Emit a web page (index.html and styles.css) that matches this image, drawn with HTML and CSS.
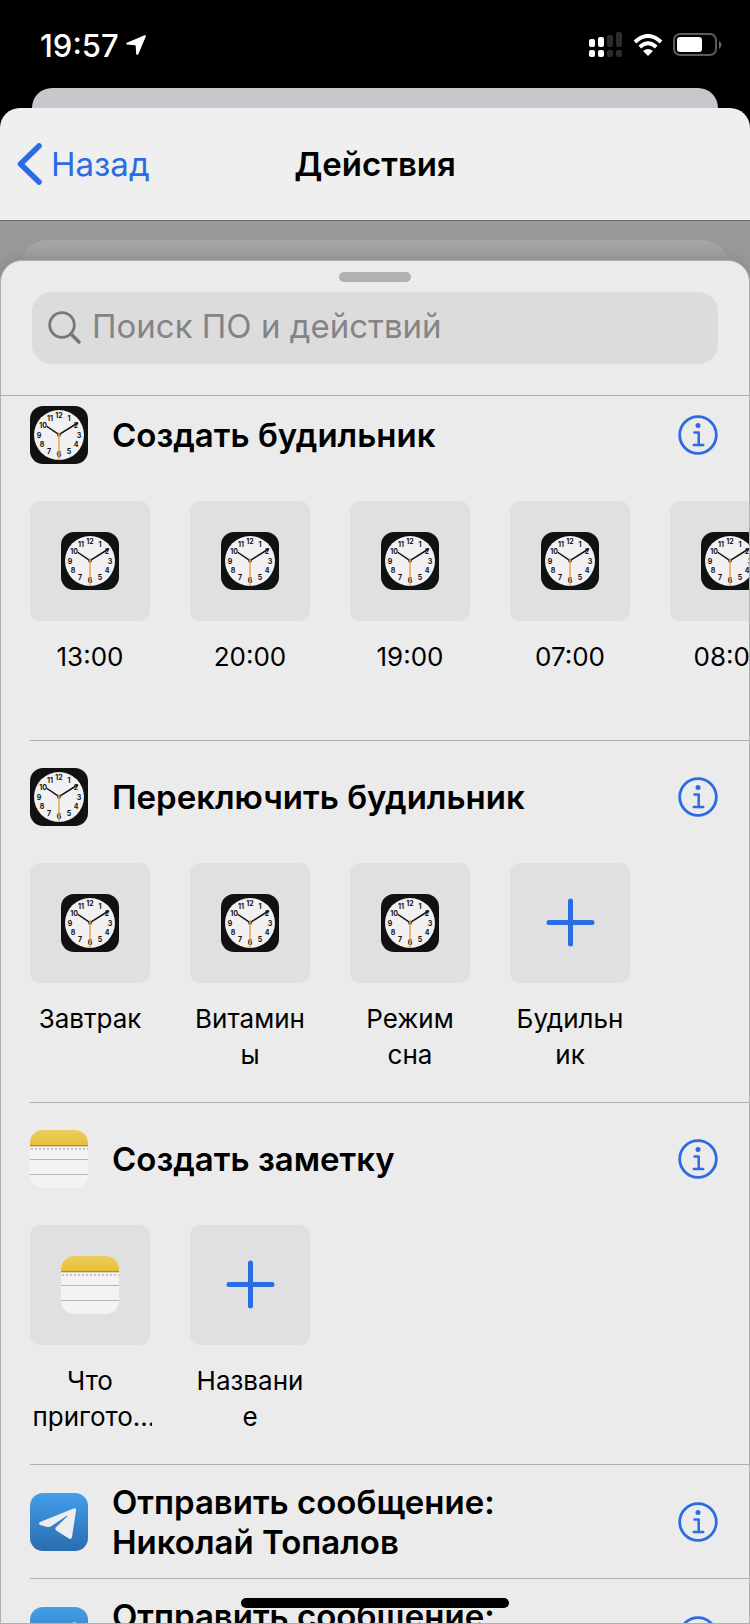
FILE: index.html
```html
<!DOCTYPE html>
<html lang="ru">
<head>
    <meta charset="UTF-8">
    <meta name="viewport" content="width=device-width, initial-scale=1.0">
    <title>Действия</title>
    <link rel="stylesheet" href="styles.css">
</head>
<body>
    <!-- Icon set -->
    <svg class="sprite" width="0" height="0" aria-hidden="true">
        <defs>
            <linearGradient id="noteTop" x1="0" y1="0" x2="0" y2="1">
                <stop offset="0" stop-color="#ebce60"/>
                <stop offset="1" stop-color="#e9bf35"/>
            </linearGradient>
            <linearGradient id="sky" x1="0" y1="0" x2="0" y2="1">
                <stop offset="0" stop-color="#429fe8"/>
                <stop offset="1" stop-color="#2a6cb0"/>
            </linearGradient>
            <clipPath id="rounded"><rect width="58" height="58" rx="13"/></clipPath>
        </defs>
        <symbol id="clock" viewBox="0 0 58 58">
            <rect width="58" height="58" rx="13" fill="#111"/>
            <circle cx="29" cy="29" r="25" fill="#f1f1f3"/>
            <g class="digits">
                <text x="29" y="12">12</text>
                <text x="39" y="15">1</text>
                <text x="46" y="22">2</text>
                <text x="49" y="32">3</text>
                <text x="46" y="41">4</text>
                <text x="39" y="48">5</text>
                <text x="29" y="51">6</text>
                <text x="19" y="48">7</text>
                <text x="12" y="41">8</text>
                <text x="9" y="32">9</text>
                <text x="13" y="22">10</text>
                <text x="20" y="15">11</text>
            </g>
            <path d="M17 20.5 29 28.7 47.5 17" fill="none" stroke="#111" stroke-width="1.5" stroke-linecap="round"/>
            <circle cx="29" cy="28.7" r="2" fill="#55402a"/>
            <path d="M29 26.5V54" stroke="#e5a144" stroke-width="1.4"/>
        </symbol>
        <symbol id="notes" viewBox="0 0 58 58">
            <g clip-path="url(#rounded)">
                <rect width="58" height="58" fill="#f3f3f3"/>
                <rect width="58" height="15" fill="url(#noteTop)"/>
                <path d="M0 15.5h58" stroke="#a08a4c"/>
                <path d="M0 16.5h58" stroke="#d9d2c2"/>
                <path d="M1 19h58" stroke="#c5c5c5" stroke-width="2" stroke-dasharray="2 2"/>
                <path d="M0 29.5h58M0 44.5h58" stroke="#b5b5b5"/>
            </g>
        </symbol>
        <symbol id="telegram" viewBox="0 0 58 58">
            <rect width="58" height="58" rx="13" fill="url(#sky)"/>
            <path d="M10.2 29 43.5 15.5Q46.6 14.5 46 17.8L42 44Q41.2 47 38.5 45.3L26.2 37.5Q24.5 36 26 34.2L37.5 23.2Q37 22.5 36 23.3L21.5 33Q19 34.4 16.5 33.7L10.2 32Q7.5 30.6 10.2 29Z" fill="#eee"/>
        </symbol>
        <symbol id="info" viewBox="0 0 40 40">
            <circle cx="20" cy="20" r="18.3" fill="none" stroke="currentColor" stroke-width="2.8"/>
            <circle cx="20" cy="10.5" r="2.5" fill="currentColor"/>
            <path d="M16.5 17.5h4.2v12M15.8 30h9.4" fill="none" stroke="currentColor" stroke-width="2.5" stroke-linecap="round" stroke-linejoin="round"/>
        </symbol>
        <symbol id="plus" viewBox="0 0 50 50">
            <path d="M25.5 3v43M4 24.5h43" stroke="currentColor" stroke-width="5" stroke-linecap="round"/>
        </symbol>
    </svg>

    <div class="status">
        <div class="status-left">
            <span class="time">19:57</span>
            <svg width="20" height="20" viewBox="0 0 20 20"><path d="M18.6.2Q20.4-.2 19.8 1.6L12.4 19Q11.2 20.7 10.2 19L9.7 11Q9.6 10.4 9 10.3L1 9.6Q-.9 8.9 1 7.8Z" fill="#fff"/></svg>
        </div>
        <div class="status-right">
            <svg width="34" height="26" viewBox="0 0 34 26">
                <g fill="#fff">
                    <rect x="0" y="7" width="6" height="8" rx="2"/>
                    <rect x="9" y="5" width="6" height="10" rx="2"/>
                    <rect x="0" y="18" width="6" height="7" rx="2"/>
                    <rect x="9" y="18" width="6" height="7" rx="2"/>
                </g>
                <g fill="#2c2c2c">
                    <rect x="18" y="3" width="6" height="12" rx="2"/>
                    <rect x="27" y="0" width="6" height="15" rx="2"/>
                    <rect x="18" y="18" width="6" height="7" rx="2"/>
                    <rect x="27" y="18" width="6" height="7" rx="2"/>
                </g>
            </svg>
            <svg width="30" height="22" viewBox="0 0 30 22">
                <path d="M2 8Q15-4 28 8" fill="none" stroke="#fff" stroke-width="4"/>
                <path d="M6.8 13Q15 5.5 23.2 13" fill="none" stroke="#fff" stroke-width="3.8"/>
                <path d="M10 17Q15 13 20 17L15 22Z" fill="#fff"/>
            </svg>
            <svg width="50" height="24" viewBox="0 0 50 24">
                <rect x="1" y="1" width="42" height="21" rx="6" fill="none" stroke="#5c5c5c" stroke-width="2"/>
                <rect x="4" y="4" width="25" height="15" rx="3" fill="#fff"/>
                <path d="M46 8q5 3.5 0 8z" fill="#6a6a6a"/>
            </svg>
        </div>
    </div>

    <div class="behind"></div>
    <header class="nav">
        <button class="back" type="button">
            <svg width="26" height="42" viewBox="0 0 26 42"><path d="M22 3 3.5 21 22 39" fill="none" stroke="currentColor" stroke-width="5.6" stroke-linecap="round" stroke-linejoin="round"/></svg>
            Назад
        </button>
        <h1>Действия</h1>
    </header>

    <main class="stage">
        <div class="behind-sheet"></div>
        <div class="sheet">
            <div class="top">
                <div class="handle"></div>
                <label class="search">
                    <svg width="34" height="34" viewBox="0 0 34 34"><circle cx="14" cy="14" r="12.3" fill="none" stroke="#78787a" stroke-width="2.8"/><path d="M23 23l8 8" stroke="#78787a" stroke-width="3.6" stroke-linecap="round"/></svg>
                    <input type="search" placeholder="Поиск ПО и действий" aria-label="Поиск ПО и действий">
                </label>
            </div>

            <div class="list">
                <section class="action">
                    <div class="head">
                        <svg class="app"><use href="#clock"/></svg>
                        <h2>Создать будильник</h2>
                        <button class="info" type="button" aria-label="Информация"><svg><use href="#info"/></svg></button>
                    </div>
                    <div class="tiles">
                        <button class="tile" type="button"><span class="box"><svg class="app"><use href="#clock"/></svg></span><span class="name">13:00</span></button>
                        <button class="tile" type="button"><span class="box"><svg class="app"><use href="#clock"/></svg></span><span class="name">20:00</span></button>
                        <button class="tile" type="button"><span class="box"><svg class="app"><use href="#clock"/></svg></span><span class="name">19:00</span></button>
                        <button class="tile" type="button"><span class="box"><svg class="app"><use href="#clock"/></svg></span><span class="name">07:00</span></button>
                        <button class="tile" type="button"><span class="box"><svg class="app"><use href="#clock"/></svg></span><span class="name">08:00</span></button>
                    </div>
                </section>

                <section class="action">
                    <div class="head">
                        <svg class="app"><use href="#clock"/></svg>
                        <h2>Переключить будильник</h2>
                        <button class="info" type="button" aria-label="Информация"><svg><use href="#info"/></svg></button>
                    </div>
                    <div class="tiles">
                        <button class="tile" type="button"><span class="box"><svg class="app"><use href="#clock"/></svg></span><span class="name">Завтрак</span></button>
                        <button class="tile" type="button"><span class="box"><svg class="app"><use href="#clock"/></svg></span><span class="name">Витамин<br>ы</span></button>
                        <button class="tile" type="button"><span class="box"><svg class="app"><use href="#clock"/></svg></span><span class="name">Режим<br>сна</span></button>
                        <button class="tile" type="button"><span class="box"><svg class="plus"><use href="#plus"/></svg></span><span class="name">Будильн<br>ик</span></button>
                    </div>
                </section>

                <section class="action">
                    <div class="head">
                        <svg class="app"><use href="#notes"/></svg>
                        <h2>Создать заметку</h2>
                        <button class="info" type="button" aria-label="Информация"><svg><use href="#info"/></svg></button>
                    </div>
                    <div class="tiles">
                        <button class="tile" type="button"><span class="box"><svg class="app"><use href="#notes"/></svg></span><span class="name">Что приготовить</span></button>
                        <button class="tile" type="button"><span class="box"><svg class="plus"><use href="#plus"/></svg></span><span class="name">Названи<br>е</span></button>
                    </div>
                </section>

                <section class="action message">
                    <div class="head">
                        <svg class="app"><use href="#telegram"/></svg>
                        <h2>Отправить сообщение:<br>Николай Топалов</h2>
                        <button class="info" type="button" aria-label="Информация"><svg><use href="#info"/></svg></button>
                    </div>
                </section>

                <section class="action message">
                    <div class="head">
                        <svg class="app"><use href="#telegram"/></svg>
                        <h2>Отправить сообщение:<br>&nbsp;</h2>
                        <button class="info" type="button" aria-label="Информация"><svg><use href="#info"/></svg></button>
                    </div>
                </section>
            </div>
        </div>
    </main>
    <div class="home-bar"></div>
</body>
</html>
```
FILE: styles.css
```css
* {
    box-sizing: border-box;
}
body {
    margin: 0;
    height: 100vh;
    overflow: hidden;
    position: relative;
    display: flex;
    flex-direction: column;
    background: #000;
    color: #000;
    font-family: Inter, "Liberation Sans", sans-serif;
}
button {
    padding: 0;
    border: none;
    background: none;
    font: inherit;
    color: inherit;
    cursor: pointer;
}
svg {
    display: block;
    flex: none;
}
.sprite {
    position: absolute;
}
.digits {
    font-size: 7px;
    font-weight: 700;
    text-anchor: middle;
    fill: #111;
}

/* Status bar */
.status {
    flex: none;
    height: 88px;
    padding: 2px 27px 0 40px;
    display: flex;
    justify-content: space-between;
    align-items: center;
    color: #fff;
}
.status-left {
    display: flex;
    align-items: center;
    gap: 7px;
}
.time {
    font-size: 31px;
    font-weight: 500;
}
.status-right {
    display: flex;
    align-items: center;
    gap: 10px;
}

/* Navigation */
.behind {
    flex: none;
    height: 40px;
    margin: 0 32px -20px;
    border-radius: 20px 20px 0 0;
    background: #c8c7cc;
}
.nav {
    flex: none;
    height: 113px;
    padding: 0 17px 1px;
    display: grid;
    grid-template-columns: 1fr auto 1fr;
    align-items: center;
    border-radius: 20px 20px 0 0;
    border-bottom: 1px solid #6b6b6d;
    background: #efeff0;
}
.back {
    display: flex;
    align-items: center;
    gap: 8px;
    font-size: 33px;
    color: #2b6be4;
}
h1 {
    margin: 0;
    font-size: 33px;
    font-weight: 600;
}

/* Sheet */
.stage {
    flex: 1;
    min-height: 0;
    padding-top: 19px;
    display: flex;
    flex-direction: column;
    background: #98989a;
}
.behind-sheet {
    flex: none;
    height: 40px;
    margin: 0 20px -20px;
    border-radius: 28px 28px 0 0;
    background: linear-gradient(#a6a6a6, #9c9c9c 20px);
}
.sheet {
    flex: 1;
    min-height: 0;
    display: flex;
    flex-direction: column;
    overflow: hidden;
    border: 1px solid #b0b0b1;
    border-radius: 22px 22px 0 0;
    background: #ebebeb;
    box-shadow: 0 0 14px rgba(0, 0, 0, 0.12);
}
.top {
    flex: none;
    padding: 11px 31px 31px;
    border-bottom: 1px solid #b0b0b2;
}
.handle {
    width: 72px;
    height: 10px;
    margin: 0 auto 10px;
    border-radius: 5px;
    background: #b1b1b3;
}
.search {
    height: 72px;
    padding: 0 16px;
    display: flex;
    align-items: center;
    gap: 10px;
    border-radius: 20px;
    background: #dcdcdc;
}
.search input {
    flex: 1;
    min-width: 0;
    padding: 0 0 4px;
    border: none;
    outline: none;
    background: none;
    font: inherit;
    font-size: 33px;
}
.search input::placeholder {
    color: #848486;
}

/* Actions */
.list {
    flex: 1;
    min-height: 0;
    padding-left: 29px;
    overflow: hidden;
}
.action {
    padding: 27px 0 29px;
    border-bottom: 1px solid #b0b0b2;
}
.action:first-child {
    padding-top: 10px;
}
.head {
    display: flex;
    align-items: center;
    gap: 24px;
    padding-right: 31px;
}
.app {
    width: 58px;
    height: 58px;
}
h2 {
    flex: 1;
    margin: 0;
    font-size: 33px;
    font-weight: 600;
    line-height: 40px;
}
.info {
    color: #2b6be4;
}
.info svg {
    width: 40px;
    height: 40px;
}
.tiles {
    display: flex;
    gap: 40px;
    margin-top: 37px;
}
.tile {
    flex: none;
    width: 120px;
    height: 210px;
    display: flex;
    flex-direction: column;
    align-items: center;
    gap: 18px;
}
.box {
    flex: none;
    width: 120px;
    height: 120px;
    display: flex;
    justify-content: center;
    align-items: center;
    border-radius: 10px;
    background: #e0e0e0;
}
.plus {
    width: 50px;
    height: 50px;
    color: #2b6be4;
}
/* slightly wider than the tile so long words keep one more letter */
.name {
    width: 124px;
    display: -webkit-box;
    -webkit-box-orient: vertical;
    -webkit-line-clamp: 2;
    overflow: hidden;
    overflow-wrap: anywhere;
    font-size: 26px;
    line-height: 36px;
    text-align: center;
}
.message {
    padding: 17px 0 16px;
}

.home-bar {
    position: absolute;
    left: 50%;
    bottom: 16px;
    width: 268px;
    height: 10px;
    margin-left: -134px;
    border-radius: 5px;
    background: #000;
}
```
